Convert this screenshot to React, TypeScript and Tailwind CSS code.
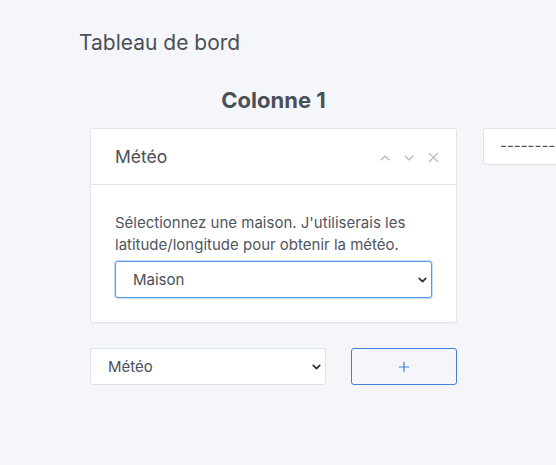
import { ChevronDown, ChevronUp, X, Plus } from 'lucide-react';

function SelectBox({ value, className, focused }: { value: string; className: string; focused?: boolean }) {
  return (
    <div className={`relative ${className}`}>
      <select
        defaultValue={value}
        className={`w-full h-full appearance-none bg-white rounded-[3px] pl-[17px] pr-8 pt-[2px] text-[15px] text-[#495057] outline-none ${
          focused
            ? 'border border-[#5b9ae8] shadow-[0_0_0_1px_rgba(91,154,232,0.35)]'
            : 'border border-[#dde3ec]'
        }`}
      >
        <option>{value}</option>
      </select>
      <ChevronDown
        className="absolute right-[3px] top-1/2 -translate-y-1/2 w-[13px] h-[13px] text-[#333] pointer-events-none"
        strokeWidth={3.25}
      />
    </div>
  );
}

export default function App() {
  return (
    <div className="min-h-[465px] w-[556px] overflow-hidden bg-[#f5f6fa] pt-[29px] pl-[79px] font-['Inter',sans-serif] text-[#495057]">
      <h1 className="text-[21px] leading-[28px] text-[#4a5058]">Tableau de bord</h1>

      <div className="flex gap-[26px] mt-[29px] ml-[11px]">
        {/* Column 1 */}
        <div className="w-[367px] shrink-0">
          <h2 className="text-center font-bold text-[22px] leading-[28px] text-[#4a5058]">Colonne 1</h2>

          <div className="mt-[14px] bg-white border border-[#e1e5ec] rounded-[3px] shadow-[0_1px_2px_rgba(0,0,0,0.04)]">
            <div className="flex items-center justify-between h-[56px] pl-[24px] pr-[14px] pt-[2px] border-b border-[#e1e5ec]">
              <span className="text-[17.5px] text-[#4a5058]">Météo</span>
              <div className="flex items-center gap-[8px] text-[#b3b8c0]">
                <ChevronUp className="w-[16px] h-[16px]" strokeWidth={1.75} />
                <ChevronDown className="w-[16px] h-[16px]" strokeWidth={1.75} />
                <X className="w-[17px] h-[17px]" strokeWidth={1.5} />
              </div>
            </div>
            <div className="px-[24px] pt-[27px] pb-[24px]">
              <p className="text-[15px] leading-[22px] text-[#50565e]">
                Sélectionnez une maison. J'utiliserais les latitude/longitude pour obtenir la météo.
              </p>
              <SelectBox value="Maison" className="mt-[5px] h-[37px]" focused />
            </div>
          </div>

          <div className="flex gap-[25px] mt-[25px]">
            <SelectBox value="Météo" className="w-[236px] h-[37px]" />
            <button className="flex-1 h-[37px] flex items-center justify-center border border-[#3f7fd6] rounded-[3px] text-[#3f7fd6]">
              <Plus className="w-[16px] h-[16px]" strokeWidth={1.75} />
            </button>
          </div>
        </div>

        {/* Column 2 */}
        <div className="w-[367px] shrink-0 pt-[42px]">
          <div className="h-[37px] bg-white border border-[#dde3ec] rounded-[3px] flex items-center pl-[16px] text-[15px] text-[#495057]">
            ---------
          </div>
        </div>
      </div>
    </div>
  );
}
